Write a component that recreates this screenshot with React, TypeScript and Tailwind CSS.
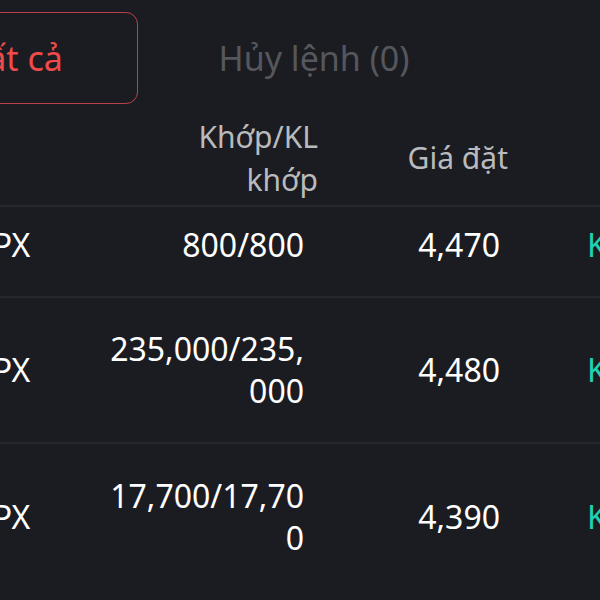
import React from "react";

type Order = {
  symbol: string;
  matched: string[];
  price: string;
  status: string;
  tall?: boolean;
};

// dữ liệu lệnh đặt
const orders: Order[] = [
  { symbol: "HPX", matched: ["800/800"], price: "4,470", status: "Khớp" },
  { symbol: "HPX", matched: ["235,000/235,", "000"], price: "4,480", status: "Khớp", tall: true },
  { symbol: "HPX", matched: ["17,700/17,70", "0"], price: "4,390", status: "Khớp", tall: true },
];

export default function App() {
  return (
    <div
      className="w-[600px] h-[600px] overflow-hidden bg-[#1b1c21] text-white"
      style={{ fontFamily: '"Noto Sans", "Open Sans", sans-serif' }}
    >
      {/* Tabs */}
      <div className="flex items-start h-[116px] -ml-[104px] pt-[12px]">
        <button className="w-[242px] h-[92px] rounded-[12px] border-[1.5px] border-[#b9424a] text-[34px] text-[#f04a4a] flex items-center justify-center">
          Tất cả
        </button>
        <div className="w-[242px] h-[92px] ml-[55px] flex items-center justify-center text-[34px] text-[#55575c]">
          Hủy lệnh (0)
        </div>
      </div>

      {/* Header */}
      <div className="flex items-center h-[91px] border-b-2 border-[#26272c] text-[30px] leading-[43px] text-[#b9babe]">
        <div className="w-[79px] shrink-0" />
        <div className="w-[239px] shrink-0 text-right pb-[6px]">
          <div>Khớp/KL</div>
          <div>khớp</div>
        </div>
        <div className="w-[190px] shrink-0 text-right pb-[6px]">Giá đặt</div>
      </div>

      {/* Rows */}
      {orders.map((o, i) => (
        <div
          key={i}
          className={`flex items-center text-[32px] leading-[42px] ${
            i < orders.length - 1 ? "border-b-2 border-[#26272c]" : ""
          } ${o.tall ? "h-[146px]" : "h-[91px] pb-[14px]"}`}
        >
          <div className="w-[110px] -ml-[31px] shrink-0">{o.symbol}</div>
          <div className="w-[225px] shrink-0 text-right">
            {o.matched.map((line, j) => (
              <div key={j}>{line}</div>
            ))}
          </div>
          <div className="w-[196px] shrink-0 text-right">{o.price}</div>
          <div className="pl-[87px] shrink-0 text-[#1fd0b3]">{o.status}</div>
        </div>
      ))}
    </div>
  );
}
